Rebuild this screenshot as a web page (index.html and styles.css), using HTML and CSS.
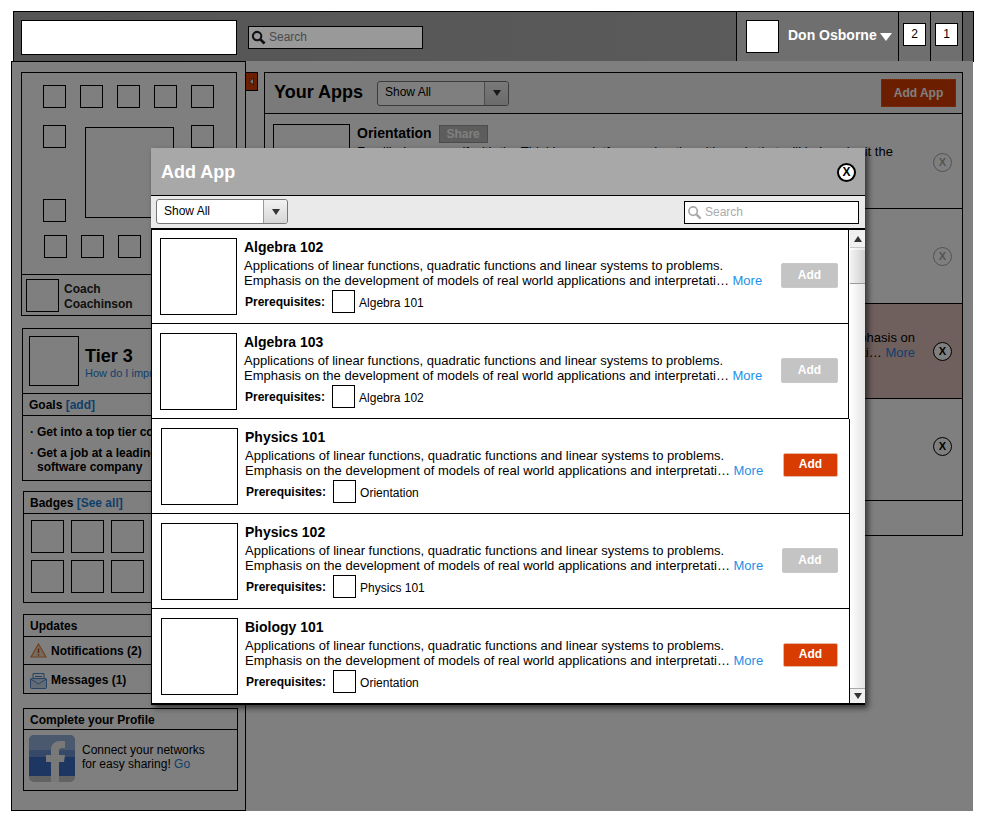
FILE: index.html
```html
<!DOCTYPE html>
<html lang="en">
<head>
    <meta charset="UTF-8">
    <title>Add App</title>
    <link rel="stylesheet" href="styles.css">
</head>
<body>
    <div class="page">
        <header class="topbar">
            <div class="logo-box"></div>
            <div class="top-search">
                <svg class="search-icon" viewBox="0 0 16 16" width="15" height="15"><circle cx="6.5" cy="6.5" r="4.5" fill="none" stroke="#111" stroke-width="2.2"/><path d="M10 10l4.5 4.5" stroke="#111" stroke-width="3"/></svg>
                <span>Search</span>
            </div>
            <div class="top-user">
                <div class="avatar"></div>
                <span class="user-name">Don Osborne</span>
                <svg class="user-caret" viewBox="0 0 12 8" width="12" height="8"><path d="M0 0h12L6 8z" fill="#fff"/></svg>
            </div>
            <div class="top-count"><span>2</span></div>
            <div class="top-count"><span>1</span></div>
            <div class="top-end"></div>
        </header>

        <main class="content">
            <aside class="sidebar">
                <section class="panel coach-panel">
                    <div class="avatar-board">
                        <i class="sq"></i><i class="sq"></i><i class="sq"></i><i class="sq"></i><i class="sq"></i>
                        <i class="sq board-left-1"></i>
                        <i class="board-main"></i>
                        <i class="sq board-right"></i>
                        <i class="sq board-left-2"></i>
                        <i class="sq board-b"></i><i class="sq board-b"></i><i class="sq board-b"></i><i class="sq board-b"></i><i class="sq board-b"></i>
                    </div>
                    <div class="coach-row">
                        <div class="coach-thumb"></div>
                        <div class="coach-name">Coach<br>Coachinson</div>
                    </div>
                </section>

                <section class="panel tier-panel">
                    <div class="tier-top">
                        <div class="tier-thumb"></div>
                        <div>
                            <div class="tier-title">Tier 3</div>
                            <a class="link tier-link">How do I improve?</a>
                        </div>
                    </div>
                    <div class="panel-head goals-head">Goals <a class="link">[add]</a></div>
                    <ul class="goals">
                        <li>Get into a top tier college</li>
                        <li>Get a job at a leading<br>software company</li>
                    </ul>
                </section>

                <section class="panel badges-panel">
                    <div class="panel-head">Badges <a class="link">[See all]</a></div>
                    <div class="badge-grid">
                        <i></i><i></i><i></i><i></i><i></i>
                        <i></i><i></i><i></i><i></i><i></i>
                    </div>
                </section>

                <section class="panel updates-panel">
                    <div class="panel-head">Updates</div>
                    <div class="update-row">
                        <svg viewBox="0 0 17 15" width="17" height="15"><path d="M8.5 1L16 14H1z" fill="#ead6bd" stroke="#e0803a" stroke-width="1.2"/><path d="M8.5 5.5v4.5M8.5 11v1.6" stroke="#b4552a" stroke-width="1.5"/></svg>
                        Notifications (2)
                    </div>
                    <div class="update-row">
                        <svg viewBox="0 0 17 17" width="17" height="17"><path d="M3 7V1.5h11V7" fill="#eef3f9" stroke="#4a86c4"/><path d="M5 4.5h7" stroke="#4a86c4"/><rect x="0.5" y="6.5" width="16" height="10" rx="1" fill="#c6d9ec" stroke="#4a86c4"/><path d="M0.5 7l8 5 8-5" fill="none" stroke="#4a86c4"/></svg>
                        Messages (1)
                    </div>
                </section>

                <section class="panel profile-panel">
                    <div class="panel-head">Complete your Profile</div>
                    <div class="profile-body">
                        <svg class="fb-icon" viewBox="0 0 46 47" width="46" height="47">
                            <rect width="46" height="47" rx="5" fill="#c4c4c4"/>
                            <path d="M0 5a5 5 0 0 1 5-5h36a5 5 0 0 1 5 5v15H0z" fill="#94b2da"/>
                            <rect y="15" width="46" height="7" fill="#6f93d0"/>
                            <rect y="22" width="46" height="19" fill="#3c6cc4"/>
                            <path d="M22 47V27h-5v-7h5v-5c0-6 4-9 9-9h5v7h-3c-2 0-3 1-3 3v4h6l-1 7h-5v20z" fill="#f2f2f2"/>
                        </svg>
                        <p>Connect your networks<br>for easy sharing! <a class="link">Go</a></p>
                    </div>
                </section>
            </aside>

            <button class="collapse-tab">
                <svg viewBox="0 0 6 10" width="5" height="9"><path d="M5.3.8v8.4L.8 5z" fill="#eee" stroke="#111" stroke-width=".8"/></svg>
            </button>

            <section class="apps">
                <div class="apps-head">
                    <h2>Your Apps</h2>
                    <div class="select apps-select">
                        <span class="select-text">Show All</span>
                        <span class="select-btn"><i></i></span>
                    </div>
                    <button class="btn-add-app">Add App</button>
                </div>
                <div class="app-row row-one">
                    <div class="app-thumb"></div>
                    <div class="app-text">
                        <div class="app-title">Orientation <span class="share">Share</span></div>
                        <p>Familiarize yourself with the Thinklearn platform and paths with goals that will help submit the</p>
                    </div>
                    <span class="x-circle faded">X</span>
                </div>
                <div class="app-row row-two">
                    <span class="x-circle faded">X</span>
                </div>
                <div class="app-row row-three">
                    <p class="app-tail">Emphasis on<br>interpretati… <a class="link">More</a></p>
                    <span class="x-circle">X</span>
                </div>
                <div class="app-row row-four">
                    <span class="x-circle">X</span>
                </div>
                <div class="apps-foot"></div>
            </section>

            <div class="overlay"></div>
        </main>

        <div class="modal">
            <div class="modal-title">
                <h2>Add App</h2>
                <span class="modal-close">X</span>
            </div>
            <div class="modal-tools">
                <div class="select modal-select">
                    <span class="select-text">Show All</span>
                    <span class="select-btn"><i></i></span>
                </div>
                <div class="modal-search">
                    <svg viewBox="0 0 16 16" width="15" height="15"><circle cx="6.5" cy="6.5" r="4.5" fill="none" stroke="#aaa" stroke-width="1.8"/><path d="M10 10l4.5 4.5" stroke="#aaa" stroke-width="2.6"/></svg>
                    <span>Search</span>
                </div>
            </div>
            <div class="modal-body">
                <div class="course-list">
                    <article class="course shifted">
                        <div class="course-thumb"></div>
                        <div class="course-info">
                            <h3>Algebra 102</h3>
                            <p>Applications of linear functions, quadratic functions and linear systems to problems.<br>Emphasis on the development of models of real world applications and interpretati… <a class="more">More</a></p>
                            <div class="prereq"><b>Prerequisites:</b><i></i><span>Algebra 101</span></div>
                        </div>
                        <button class="btn-add off">Add</button>
                    </article>
                    <article class="course shifted">
                        <div class="course-thumb"></div>
                        <div class="course-info">
                            <h3>Algebra 103</h3>
                            <p>Applications of linear functions, quadratic functions and linear systems to problems.<br>Emphasis on the development of models of real world applications and interpretati… <a class="more">More</a></p>
                            <div class="prereq"><b>Prerequisites:</b><i></i><span>Algebra 102</span></div>
                        </div>
                        <button class="btn-add off">Add</button>
                    </article>
                    <article class="course">
                        <div class="course-thumb"></div>
                        <div class="course-info">
                            <h3>Physics 101</h3>
                            <p>Applications of linear functions, quadratic functions and linear systems to problems.<br>Emphasis on the development of models of real world applications and interpretati… <a class="more">More</a></p>
                            <div class="prereq"><b>Prerequisites:</b><i></i><span>Orientation</span></div>
                        </div>
                        <button class="btn-add">Add</button>
                    </article>
                    <article class="course">
                        <div class="course-thumb"></div>
                        <div class="course-info">
                            <h3>Physics 102</h3>
                            <p>Applications of linear functions, quadratic functions and linear systems to problems.<br>Emphasis on the development of models of real world applications and interpretati… <a class="more">More</a></p>
                            <div class="prereq"><b>Prerequisites:</b><i></i><span>Physics 101</span></div>
                        </div>
                        <button class="btn-add off">Add</button>
                    </article>
                    <article class="course">
                        <div class="course-thumb"></div>
                        <div class="course-info">
                            <h3>Biology 101</h3>
                            <p>Applications of linear functions, quadratic functions and linear systems to problems.<br>Emphasis on the development of models of real world applications and interpretati… <a class="more">More</a></p>
                            <div class="prereq"><b>Prerequisites:</b><i></i><span>Orientation</span></div>
                        </div>
                        <button class="btn-add">Add</button>
                    </article>
                </div>
                <div class="scrollbar">
                    <div class="scroll-arrow"><i class="up"></i></div>
                    <div class="scroll-thumb"></div>
                    <div class="scroll-track"></div>
                    <div class="scroll-arrow bottom"><i class="down"></i></div>
                </div>
            </div>
        </div>
    </div>
</body>
</html>
```

FILE: styles.css
```css
* {
    box-sizing: border-box;
}

body {
    margin: 0;
    background-color: #ffffff;
    color: #000000;
    font-family: 'Liberation Sans', Arial, sans-serif;
    font-size: 12px;
}

p, h2, h3, ul {
    margin: 0;
    padding: 0;
}

button {
    font-family: inherit;
    border: none;
    padding: 0;
}

i {
    display: block;
}

.page {
    position: relative;
    width: 984px;
    height: 821px;
    overflow: hidden;
    padding-top: 11px;
}

/* top bar */
.topbar {
    display: flex;
    align-items: stretch;
    width: 961px;
    height: 51px;
    margin-left: 13px;
    border: 1px solid #000;
    background: linear-gradient(to right, #555555, #5c5c5c);
}

.logo-box {
    width: 216px;
    height: 35px;
    margin: 8px 0 0 7px;
    background-color: #fff;
    border: 1px solid #000;
}

.top-search {
    display: flex;
    align-items: center;
    width: 175px;
    height: 23px;
    margin: 14px 0 0 11px;
    padding: 0 0 1px 2px;
    background-color: #999;
    border: 1px solid #000;
    color: #4a4a4a;
}

.search-icon {
    margin-right: 3px;
}

.top-user {
    display: flex;
    align-items: flex-start;
    width: 162px;
    margin-left: auto;
    padding: 8px 0 0 9px;
    background-color: #6f6f6f;
    border-left: 1px solid #000;
    color: #fff;
}

.avatar {
    width: 33px;
    height: 33px;
    background-color: #fff;
    border: 1px solid #000;
}

.user-name {
    margin: 7px 0 0 9px;
    font-size: 14px;
    font-weight: bold;
}

.user-caret {
    margin: 13px 0 0 3px;
}

.top-count {
    width: 32px;
    padding: 11px 0 0 4px;
    background-color: #6f6f6f;
    border-left: 1px solid #000;
}

.top-count span {
    display: block;
    width: 23px;
    height: 23px;
    line-height: 21px;
    text-align: center;
    background-color: #fff;
    border: 1px solid #000;
}

.top-end {
    flex: none;
    width: 11px;
    border-left: 1px solid #000;
}

/* page below the bar, everything here sits under the overlay */
.content {
    position: relative;
    display: flex;
    align-items: flex-start;
    width: 962px;
    height: 750px;
    margin: -1px 0 0 11px;
    background-color: #fff;
}

.overlay {
    position: absolute;
    inset: 0;
    background-color: rgba(0, 0, 0, 0.5);
}

.sidebar {
    flex: none;
    width: 235px;
    height: 750px;
    padding: 10px 8px 0 9px;
    border: 1px solid #000;
}

.panel {
    border: 1px solid #000;
    width: 215px;
}

.panel-head {
    height: 22px;
    line-height: 23px;
    padding-left: 6px;
    font-weight: bold;
    border-bottom: 1px solid #000;
}

.link {
    color: #1f7fd6;
}

.coach-panel {
    width: 216px;
    height: 244px;
}

.avatar-board {
    display: grid;
    grid-template-columns: repeat(5, 23px);
    grid-template-rows: 24px 58px 24px 24px;
    column-gap: 14px;
    row-gap: 16px;
    height: 202px;
    padding: 12px 0 0 21px;
    border-bottom: 1px solid #000;
}

.sq {
    width: 23px;
    height: 23px;
    border: 1px solid #000;
}

.board-left-1 {
    grid-column: 1;
    grid-row: 2;
}

.board-main {
    grid-column: 2 / 5;
    grid-row: 2 / 4;
    width: 89px;
    height: 91px;
    margin: 2px 0 0 5px;
    border: 1px solid #000;
}

.board-right {
    grid-column: 5;
    grid-row: 2;
}

.board-left-2 {
    grid-column: 1;
    grid-row: 3;
}

.board-b {
    grid-row: 4;
    margin: -4px 0 0 1px;
}

.coach-row {
    display: flex;
    padding: 4px 0 0 4px;
}

.coach-thumb {
    width: 33px;
    height: 33px;
    border: 1px solid #000;
}

.coach-name {
    margin: 3px 0 0 5px;
    line-height: 15px;
    font-weight: bold;
    color: #222;
}

.tier-panel {
    height: 153px;
    margin: 12px 0 0 1px;
}

.tier-top {
    display: flex;
    height: 65px;
    padding: 7px 0 0 6px;
    border-bottom: 1px solid #000;
}

.tier-thumb {
    width: 50px;
    height: 50px;
    margin-right: 6px;
    border: 1px solid #000;
}

.tier-title {
    margin-top: 10px;
    font-size: 18px;
    font-weight: bold;
    line-height: 21px;
}

.tier-link {
    display: block;
    font-size: 11px;
    line-height: 12px;
}

.goals {
    list-style: none;
    padding: 9px 4px 0 7px;
    font-weight: bold;
    line-height: 14px;
}

.goals li {
    position: relative;
    padding-left: 7px;
    margin-bottom: 7px;
}

.goals li::before {
    content: "·";
    position: absolute;
    left: 0;
}

.badges-panel {
    height: 112px;
    margin: 10px 0 0 2px;
}

.badge-grid {
    display: grid;
    grid-template-columns: repeat(5, 33px);
    gap: 7px;
    padding: 6px 0 0 7px;
}

.badge-grid i {
    height: 33px;
    border: 1px solid #000;
}

.updates-panel {
    height: 80px;
    margin: 11px 0 0 2px;
}

.update-row {
    display: flex;
    align-items: center;
    gap: 4px;
    height: 28px;
    padding-left: 6px;
    font-weight: bold;
    border-bottom: 1px solid #000;
}

.update-row:last-child {
    padding-top: 2px;
    border-bottom: none;
}

.profile-panel {
    height: 83px;
    margin: 14px 0 0 2px;
}

.profile-panel .panel-head {
    height: 21px;
    line-height: 22px;
}

.profile-body {
    display: flex;
    padding: 5px 0 0 5px;
}

.fb-icon {
    flex: none;
    margin-right: 7px;
}

.profile-body p {
    margin-top: 8px;
    line-height: 14px;
}

.collapse-tab {
    display: flex;
    align-items: center;
    justify-content: center;
    flex: none;
    width: 12px;
    height: 19px;
    margin-top: 11px;
    background-color: #d83c00;
    border: 1px solid #000;
    border-left: none;
}

.apps {
    flex: none;
    width: 699px;
    height: 464px;
    margin: 11px 0 0 6px;
    border: 1px solid #000;
}

.apps-head {
    display: flex;
    align-items: center;
    height: 41px;
    padding: 0 6px 0 9px;
    background-color: #f4f4f4;
    border-bottom: 1px solid #000;
}

.apps-head h2 {
    padding-bottom: 2px;
    font-size: 18px;
}

.select {
    display: flex;
    background-color: #fff;
    border: 1px solid #777;
    border-radius: 3px;
    font-size: 12px;
}

.select-text {
    flex: 1;
    padding-left: 7px;
}

.select-btn {
    display: flex;
    align-items: center;
    justify-content: center;
    width: 24px;
    background: linear-gradient(#f2f2f2, #d6d6d6);
    border-left: 1px solid #999;
    border-radius: 0 3px 3px 0;
}

.select-btn i {
    border-left: 4px solid transparent;
    border-right: 4px solid transparent;
    border-top: 6px solid #333;
}

.apps-select {
    width: 132px;
    height: 25px;
    margin-left: 14px;
    line-height: 21px;
}

.btn-add-app {
    width: 75px;
    height: 28px;
    margin-left: auto;
    background-color: #d83c00;
    border: 1px dotted #888;
    color: #fff;
    font-size: 12px;
    font-weight: bold;
}

.app-row {
    position: relative;
    border-bottom: 1px solid #000;
}

.row-one {
    display: flex;
    height: 95px;
    padding: 10px 0 0 8px;
}

.row-two {
    height: 95px;
}

.row-three {
    height: 95px;
    background-color: #dfc1bd;
}

.row-four {
    height: 102px;
}

.app-thumb {
    width: 77px;
    height: 78px;
    border: 1px solid #000;
    flex: none;
}

.app-text {
    width: 540px;
    margin-left: 7px;
    font-size: 13px;
    line-height: 15px;
    white-space: nowrap;
}

.app-title {
    font-size: 14px;
    font-weight: bold;
    line-height: 19px;
    margin-bottom: 1px;
}

.share {
    display: inline-block;
    width: 49px;
    margin-left: 3px;
    text-align: center;
    font-size: 12px;
    line-height: 16px;
    background-color: #bbb;
    border: 1px solid #999;
    color: #fff;
}

.app-tail {
    position: absolute;
    right: 47px;
    top: 26px;
    font-size: 13px;
    text-align: right;
    line-height: 15px;
}

.x-circle {
    position: absolute;
    right: 10px;
    width: 19px;
    height: 19px;
    line-height: 17px;
    text-align: center;
    font-size: 11px;
    font-weight: bold;
    border: 1px solid #000;
    border-radius: 50%;
    background-color: #fff;
}

.row-one .x-circle {
    top: 39px;
}

.row-two .x-circle {
    top: 38px;
}

.row-three .x-circle,
.row-four .x-circle {
    top: 38px;
}

.x-circle.faded {
    opacity: 0.35;
}

/* modal */
.modal {
    position: absolute;
    left: 151px;
    top: 148px;
    width: 714px;
    height: 557px;
    background-color: #eaeaea;
    box-shadow: 3px 3px 6px rgba(0, 0, 0, 0.6);
}

.modal-title {
    display: flex;
    align-items: center;
    justify-content: space-between;
    height: 48px;
    padding: 1px 9px 0 10px;
    background-color: #a8a8a8;
    border-bottom: 1px solid #000;
    color: #fff;
}

.modal-title h2 {
    font-size: 18px;
}

.modal-close {
    width: 19px;
    height: 19px;
    line-height: 15px;
    text-align: center;
    color: #000;
    background-color: #fff;
    border: 2px solid #000;
    border-radius: 50%;
    font-size: 12px;
    font-weight: bold;
}

.modal-tools {
    display: flex;
    align-items: flex-start;
    justify-content: space-between;
    height: 32px;
    padding: 3px 6px 0 5px;
}

.modal-select {
    width: 132px;
    height: 25px;
    line-height: 23px;
}

.modal-search {
    display: flex;
    align-items: center;
    gap: 3px;
    width: 175px;
    height: 23px;
    margin-top: 2px;
    padding: 0 0 1px 2px;
    background-color: #fff;
    border: 1px solid #000;
    color: #aaa;
}

.modal-body {
    display: flex;
    height: 477px;
    background-color: #fff;
    border-top: 2px solid #000;
    border-bottom: 2px solid #000;
}

.course-list {
    flex: none;
    width: 699px;
}

.course {
    display: flex;
    height: 95px;
    padding: 9px 0 0 9px;
    border-left: 1px solid #000;
    border-bottom: 1px solid #000;
    border-right: 1px solid #000;
}

.course:first-child {
    height: 94px;
    padding-top: 8px;
}

.course:last-child {
    height: 94px;
    border-bottom: none;
}

.course.shifted {
    padding-left: 8px;
    margin-right: 1px;
}

.course-thumb {
    flex: none;
    width: 77px;
    height: 77px;
    background-color: #fff;
    border: 1px solid #000;
}

.course-info {
    flex: none;
    width: 537px;
    margin-left: 7px;
}

.course-info h3 {
    font-size: 14px;
    line-height: 18px;
}

.course-info p {
    margin-top: 2px;
    font-size: 13px;
    line-height: 15px;
    white-space: nowrap;
}

.more {
    color: #1e90e8;
}

.prereq {
    display: flex;
    align-items: center;
    margin: 2px 0 0 1px;
    font-size: 12px;
}

.prereq i {
    width: 23px;
    height: 23px;
    margin: 0 4px 0 7px;
    border: 1px solid #000;
}

.prereq span {
    padding-top: 2px;
}

.btn-add {
    flex: none;
    width: 55px;
    height: 24px;
    margin: 25px 0 0 1px;
    padding-bottom: 2px;
    background-color: #d83c00;
    border: 1px solid #e8b8a0;
    border-radius: 2px;
    color: #fff;
    font-size: 12px;
    font-weight: bold;
}

.btn-add.off {
    width: 56px;
    height: 25px;
    margin-left: 0;
    background-color: #c4c4c4;
    border-color: #c8c8c8;
}

.shifted .btn-add.off {
    width: 57px;
}

.scrollbar {
    display: flex;
    flex-direction: column;
    flex: none;
    width: 15px;
    background: linear-gradient(to right, #ffffff, #e4e4e4);
}

.scroll-arrow {
    display: flex;
    align-items: center;
    justify-content: center;
    height: 18px;
    background-color: #f0f0f0;
    border-bottom: 1px solid #c8c8c8;
}

.scroll-arrow.bottom {
    height: 15px;
    border-top: 1px solid #aaa;
    border-bottom: none;
}

.scroll-arrow .up {
    border-left: 4px solid transparent;
    border-right: 4px solid transparent;
    border-bottom: 6px solid #333;
}

.scroll-arrow .down {
    border-left: 4px solid transparent;
    border-right: 4px solid transparent;
    border-top: 6px solid #333;
}

.scroll-thumb {
    height: 34px;
    margin-top: 2px;
    background: linear-gradient(to right, #f4f4f4, #cfcfcf);
    border-bottom: 1px solid #999;
}

.scroll-track {
    flex: 1;
}
```
